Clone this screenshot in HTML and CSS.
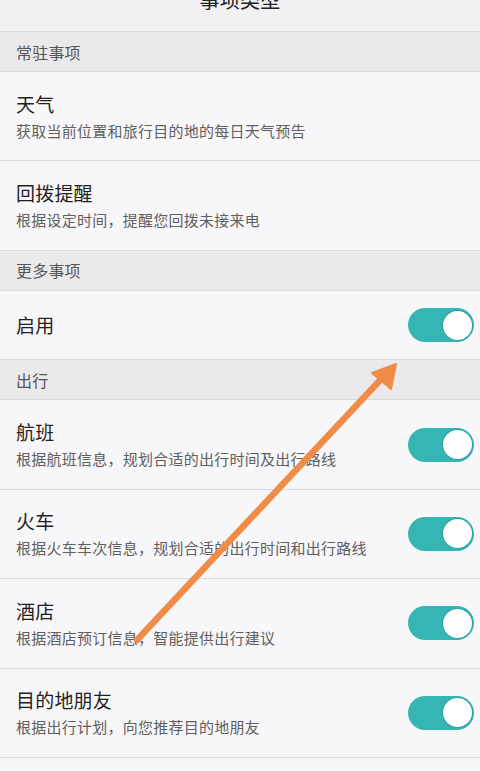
FILE: index.html
```html
<!DOCTYPE html>
<html lang="zh-CN">
<head>
<meta charset="utf-8">
<title>事项类型</title>
<link rel="stylesheet" href="styles.css">
</head>
<body>
<div class="page">
  <header class="topbar"><h1 class="title">事项类型</h1></header>

  <div class="section">常驻事项</div>
  <div class="row">
    <div class="texts"><div class="name">天气</div><div class="desc">获取当前位置和旅行目的地的每日天气预告</div></div>
  </div>
  <div class="row">
    <div class="texts"><div class="name">回拨提醒</div><div class="desc">根据设定时间，提醒您回拨未接来电</div></div>
  </div>

  <div class="section">更多事项</div>
  <div class="row single">
    <div class="texts"><div class="name">启用</div></div>
    <span class="switch"><span class="knob"></span></span>
  </div>

  <div class="section">出行</div>
  <div class="row">
    <div class="texts"><div class="name">航班</div><div class="desc">根据航班信息，规划合适的出行时间及出行路线</div></div>
    <span class="switch"><span class="knob"></span></span>
  </div>
  <div class="row">
    <div class="texts"><div class="name">火车</div><div class="desc">根据火车车次信息，规划合适的出行时间和出行路线</div></div>
    <span class="switch"><span class="knob"></span></span>
  </div>
  <div class="row">
    <div class="texts"><div class="name">酒店</div><div class="desc">根据酒店预订信息，智能提供出行建议</div></div>
    <span class="switch"><span class="knob"></span></span>
  </div>
  <div class="row">
    <div class="texts"><div class="name">目的地朋友</div><div class="desc">根据出行计划，向您推荐目的地朋友</div></div>
    <span class="switch"><span class="knob"></span></span>
  </div>
  <div class="row">
    <div class="texts"><div class="name">&nbsp;</div><div class="desc">&nbsp;</div></div>
  </div>

  <svg class="arrow" width="480" height="771" viewBox="0 0 480 771" aria-hidden="true">
    <line x1="137" y1="640" x2="384" y2="376" stroke="#f08c48" stroke-width="6.5" stroke-linecap="round"/>
    <polygon points="396,364 372,373 391,389" fill="#f08c48" stroke="#f08c48" stroke-width="2" stroke-linejoin="round"/>
  </svg>
</div>
</body>
</html>
```

FILE: styles.css
```css
* { box-sizing: border-box; }
html, body { margin: 0; padding: 0; }
body {
  width: 480px;
  height: 771px;
  overflow: hidden;
  background: #f7f6f8;
  font-family: "Noto Sans CJK SC", "Noto Sans", sans-serif;
  color: #222;
}
.page { position: relative; width: 480px; height: 771px; overflow: hidden; }

.topbar {
  height: 32px;
  background: #f2f0f3;
  border-bottom: 1px solid #dcdadd;
  overflow: hidden;
  display: flex;
  justify-content: center;
}
.title {
  margin: -12px 0 0;
  font-size: 20px;
  line-height: 24px;
  font-weight: 400;
  letter-spacing: 0.3px;
  color: #222;
}

.section {
  height: 40px;
  padding-left: 16px;
  display: flex;
  align-items: center;
  background: #ebe9ec;
  border-bottom: 1px solid #dcdadd;
  font-size: 16px;
  letter-spacing: 0.2px;
  color: #555;
}

.row {
  height: 89.4px;
  padding: 0 6px 0 16px;
  display: flex;
  align-items: center;
  justify-content: space-between;
  background: #f7f6f8;
  border-bottom: 1px solid #dcdadd;
}
.row.single { height: 69.6px; }

.texts { display: flex; flex-direction: column; gap: 4px; padding-bottom: 1px; }
.name { font-size: 19px; line-height: 26px; color: #1f1f1f; letter-spacing: 0.2px; }
.desc { font-size: 15px; line-height: 20px; color: #5f5f5f; letter-spacing: 0.25px; }

.switch {
  width: 66px;
  height: 34px;
  border-radius: 17px;
  background: #36b5b5;
  display: flex;
  align-items: center;
  justify-content: flex-end;
  padding-right: 2px;
  flex: none;
}
.knob {
  width: 29px;
  height: 29px;
  border-radius: 50%;
  background: #fff;
  box-shadow: 0 0 0 1px #2aa3a3;
}

.arrow { position: absolute; left: 0; top: 0; pointer-events: none; }
```
